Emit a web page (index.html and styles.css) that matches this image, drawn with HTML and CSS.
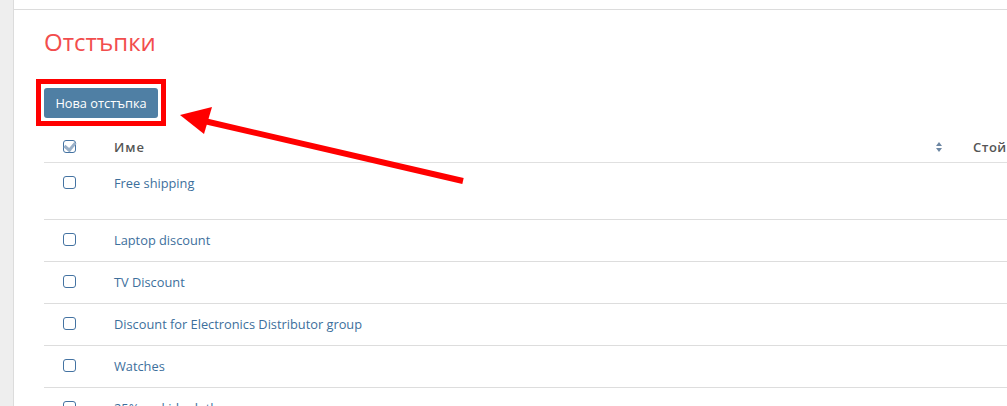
FILE: index.html
```html
<!DOCTYPE html>
<html lang="bg">
<head>
  <meta charset="UTF-8">
  <title>Отстъпки</title>
  <link rel="stylesheet" href="styles.css">
</head>
<body>
  <div class="sidebar"></div>

  <div class="main">
    <div class="topbar"></div>

    <div class="content">
      <h1 class="title">Отстъпки</h1>

      <div class="toolbar">
        <span class="highlight">
          <button class="btn-primary">Нова отстъпка</button>
        </span>
      </div>

      <div class="table">
        <div class="row head">
          <div class="cell check"><span class="box checked"></span></div>
          <div class="cell name">Име <span class="sort"></span></div>
          <div class="cell value">Стойност</div>
        </div>
        <div class="row first">
          <div class="cell check"><span class="box"></span></div>
          <div class="cell name"><a href="#">Free shipping</a></div>
          <div class="cell value"></div>
        </div>
        <div class="row">
          <div class="cell check"><span class="box"></span></div>
          <div class="cell name"><a href="#">Laptop discount</a></div>
          <div class="cell value"></div>
        </div>
        <div class="row">
          <div class="cell check"><span class="box"></span></div>
          <div class="cell name"><a href="#">TV Discount</a></div>
          <div class="cell value"></div>
        </div>
        <div class="row">
          <div class="cell check"><span class="box"></span></div>
          <div class="cell name"><a href="#">Discount for Electronics Distributor group</a></div>
          <div class="cell value"></div>
        </div>
        <div class="row">
          <div class="cell check"><span class="box"></span></div>
          <div class="cell name"><a href="#">Watches</a></div>
          <div class="cell value"></div>
        </div>
        <div class="row">
          <div class="cell check"><span class="box"></span></div>
          <div class="cell name"><a href="#">25% on kids clothes</a></div>
          <div class="cell value"></div>
        </div>
      </div>
    </div>
  </div>

  <!-- Annotation arrow -->
  <svg class="annotation" width="1007" height="406" viewBox="0 0 1007 406">
    <line x1="463" y1="181" x2="200" y2="120" stroke="#ff0000" stroke-width="6"/>
    <polygon points="180,115 212,107 204,134" fill="#ff0000"/>
  </svg>
</body>
</html>
```

FILE: styles.css
```css
/* General Styles */
body {
  margin: 0;
  display: flex;
  height: 406px;
  overflow: hidden;
  font-family: 'Open Sans', sans-serif;
  font-size: 13px;
  color: #333;
  background: #fff;
}

.sidebar {
  width: 13px;
  flex: none;
  background-color: #eeeeee;
  border-right: 1px solid #dcdcdc;
}

.main {
  flex: 1;
  min-width: 0;
  overflow: hidden;
}

.topbar {
  height: 9px;
  border-bottom: 1px solid #dcdcdc;
}

.content {
  padding: 0 0 0 30px;
}

.title {
  margin: 16px 0 0 0;
  font-size: 24px;
  font-weight: 400;
  line-height: 32px;
  color: #f24d4d;
}

/* Toolbar with highlighted button */
.toolbar {
  margin-top: 21px;
  height: 57px;
}

.highlight {
  display: inline-block;
  margin-left: -8px;
  padding: 4px 3px 3px 3px;
  border: 5px solid #ff0000;
}

.btn-primary {
  display: block;
  width: 114px;
  height: 30px;
  padding: 0;
  border: none;
  border-radius: 3px;
  background-color: #4f7fa4;
  color: #fff;
  font-family: 'Open Sans', sans-serif;
  font-size: 12.8px;
}

/* Table */
.table {
  width: 1100px;
}

.row {
  display: grid;
  grid-template-columns: 70px 846px 184px;
  border-bottom: 1px solid #dddddd;
}

.row.head {
  height: 26px;
  border-bottom-color: #e0e0e0;
}

.row.first {
  min-height: 56px;
}

.cell {
  padding: 11px 0 12px 0;
  line-height: 18px;
  font-size: 12.8px;
}

.head .cell {
  padding: 2px 0 6px 0;
  font-size: 13px;
  font-weight: 600;
  letter-spacing: 1px;
  color: #555;
}

.check {
  padding-left: 19px !important;
}

.name {
  display: flex;
  justify-content: space-between;
  align-items: flex-start;
}

.head .name {
  align-items: center;
}

.name a {
  color: #3d6f9c;
  text-decoration: none;
}

.value {
  padding-left: 13px !important;
  letter-spacing: 0.5px !important;
}

.box {
  display: inline-block;
  width: 11px;
  height: 11px;
  margin-top: 2px;
  vertical-align: top;
  border: 1.5px solid #4473a2;
  border-radius: 3px;
  background: #fff;
  position: relative;
}

.box.checked::after {
  content: "";
  position: absolute;
  left: 2px;
  top: -1px;
  width: 5px;
  height: 8px;
  border-right: 3px solid #9ab0c8;
  border-bottom: 3px solid #9ab0c8;
  transform: rotate(40deg);
}

.sort {
  position: relative;
  width: 7px;
  height: 10px;
  margin-right: 17px;
}

.sort::before,
.sort::after {
  content: "";
  position: absolute;
  left: 0;
  border-left: 3.5px solid transparent;
  border-right: 3.5px solid transparent;
}

.sort::before {
  top: 0;
  border-bottom: 4px solid #6d87a3;
}

.sort::after {
  bottom: 0;
  border-top: 4px solid #6d87a3;
}

/* Annotation overlay */
.annotation {
  position: absolute;
  left: 0;
  top: 0;
  pointer-events: none;
}
```
